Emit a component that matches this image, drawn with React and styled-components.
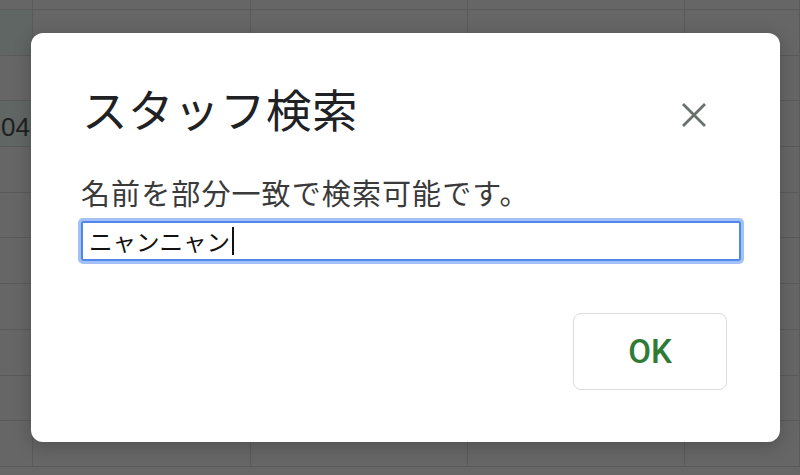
import React from "react";
import styled, { createGlobalStyle } from "styled-components";

const GlobalStyle = createGlobalStyle`
  html, body {
    margin: 0;
    padding: 0;
    background: #666666;
    overflow: hidden;
  }
  * {
    box-sizing: border-box;
  }
`;

const Page = styled.div`
  position: relative;
  width: 800px;
  height: 475px;
  overflow: hidden;
  font-family: "Noto Sans CJK JP", "Noto Sans", sans-serif;
`;

// dimmed spreadsheet behind the dialog
const Sheet = styled.div`
  display: grid;
  grid-template-columns: 33px 218px 217px 217px 1fr;
  grid-template-rows: 10px repeat(10, 45.7px);
  background: #666666;
`;

const Cell = styled.div`
  border-right: 1.5px solid #5a5a5a;
  border-bottom: 1.5px solid #5a5a5a;
  background: ${(p) => (p.tinted ? "#606663" : "transparent")};
  display: flex;
  align-items: center;
  justify-content: flex-end;
  overflow: hidden;
  white-space: nowrap;
  padding: 8px 2px 0 0;
  font-family: "Liberation Sans", Arial, sans-serif;
  font-size: 26px;
  color: #1f1f1f;
`;

const Overlay = styled.div`
  position: absolute;
  inset: 0;
  padding: 33px 20px 33px 31px;
`;

const Dialog = styled.div`
  width: 749px;
  height: 409px;
  background: #ffffff;
  border-radius: 12px;
  box-shadow: 0 4px 18px rgba(0, 0, 0, 0.22);
  padding: 47px 39px 0 50px;
  display: flex;
  flex-direction: column;
`;

const Header = styled.div`
  display: flex;
  align-items: center;
  justify-content: space-between;
`;

const Title = styled.h1`
  margin: 0 0 0 1px;
  font-size: 45.5px;
  font-weight: 400;
  line-height: 56px;
  color: #202124;
  letter-spacing: 0.5px;
`;

const CloseButton = styled.button`
  width: 30px;
  height: 30px;
  margin: 14px 32px 0 0;
  padding: 0;
  border: none;
  background: none;
  display: flex;
  align-items: center;
  justify-content: center;
  cursor: pointer;
`;

const Hint = styled.p`
  margin: 38px 0 0 0;
  font-size: 29px;
  line-height: 36px;
  color: #3a3a3a;
  letter-spacing: 1.1px;
`;

const Field = styled.div`
  margin-top: 11px;
  height: 40px;
  border: 2px solid #5087ec;
  box-shadow: 0 0 0 3px #a3c1f6;
  border-radius: 2px;
  display: flex;
  align-items: center;
  padding: 0 6px;
  font-size: 23.5px;
  color: #111;
`;

const Caret = styled.span`
  display: inline-block;
  width: 1.5px;
  height: 28px;
  margin-left: 2px;
  background: #111;
`;

const Footer = styled.div`
  display: flex;
  justify-content: flex-end;
  margin-top: 52px;
  padding-right: 14px;
`;

const OkButton = styled.button`
  width: 154px;
  height: 77px;
  border: 1.5px solid #dadce0;
  border-radius: 8px;
  background: #ffffff;
  color: #2f7b36;
  font-family: Roboto, "Noto Sans", sans-serif;
  font-size: 33px;
  font-weight: 500;
  cursor: pointer;
`;

const ROWS = 11;
const COLS = 5;

function CloseIcon() {
  return (
    <svg width="24" height="24" viewBox="0 0 24 24">
      <path
        d="M1 1 L23 23 M23 1 L1 23"
        stroke="#69716d"
        strokeWidth="2.8"
        fill="none"
      />
    </svg>
  );
}

export default function App() {
  const cells = [];
  for (let r = 0; r < ROWS; r++) {
    for (let c = 0; c < COLS; c++) {
      const tinted = c === 0 && (r === 1 || r === 3);
      cells.push(
        <Cell key={`${r}-${c}`} tinted={tinted}>
          {c === 0 && r === 3 ? "04" : ""}
        </Cell>
      );
    }
  }

  return (
    <Page>
      <GlobalStyle />
      <Sheet>{cells}</Sheet>
      <Overlay>
        <Dialog role="dialog">
          <Header>
            <Title>スタッフ検索</Title>
            <CloseButton aria-label="閉じる">
              <CloseIcon />
            </CloseButton>
          </Header>
          <Hint>名前を部分一致で検索可能です。</Hint>
          <Field role="textbox">
            ニャンニャン
            <Caret />
          </Field>
          <Footer>
            <OkButton>OK</OkButton>
          </Footer>
        </Dialog>
      </Overlay>
    </Page>
  );
}
